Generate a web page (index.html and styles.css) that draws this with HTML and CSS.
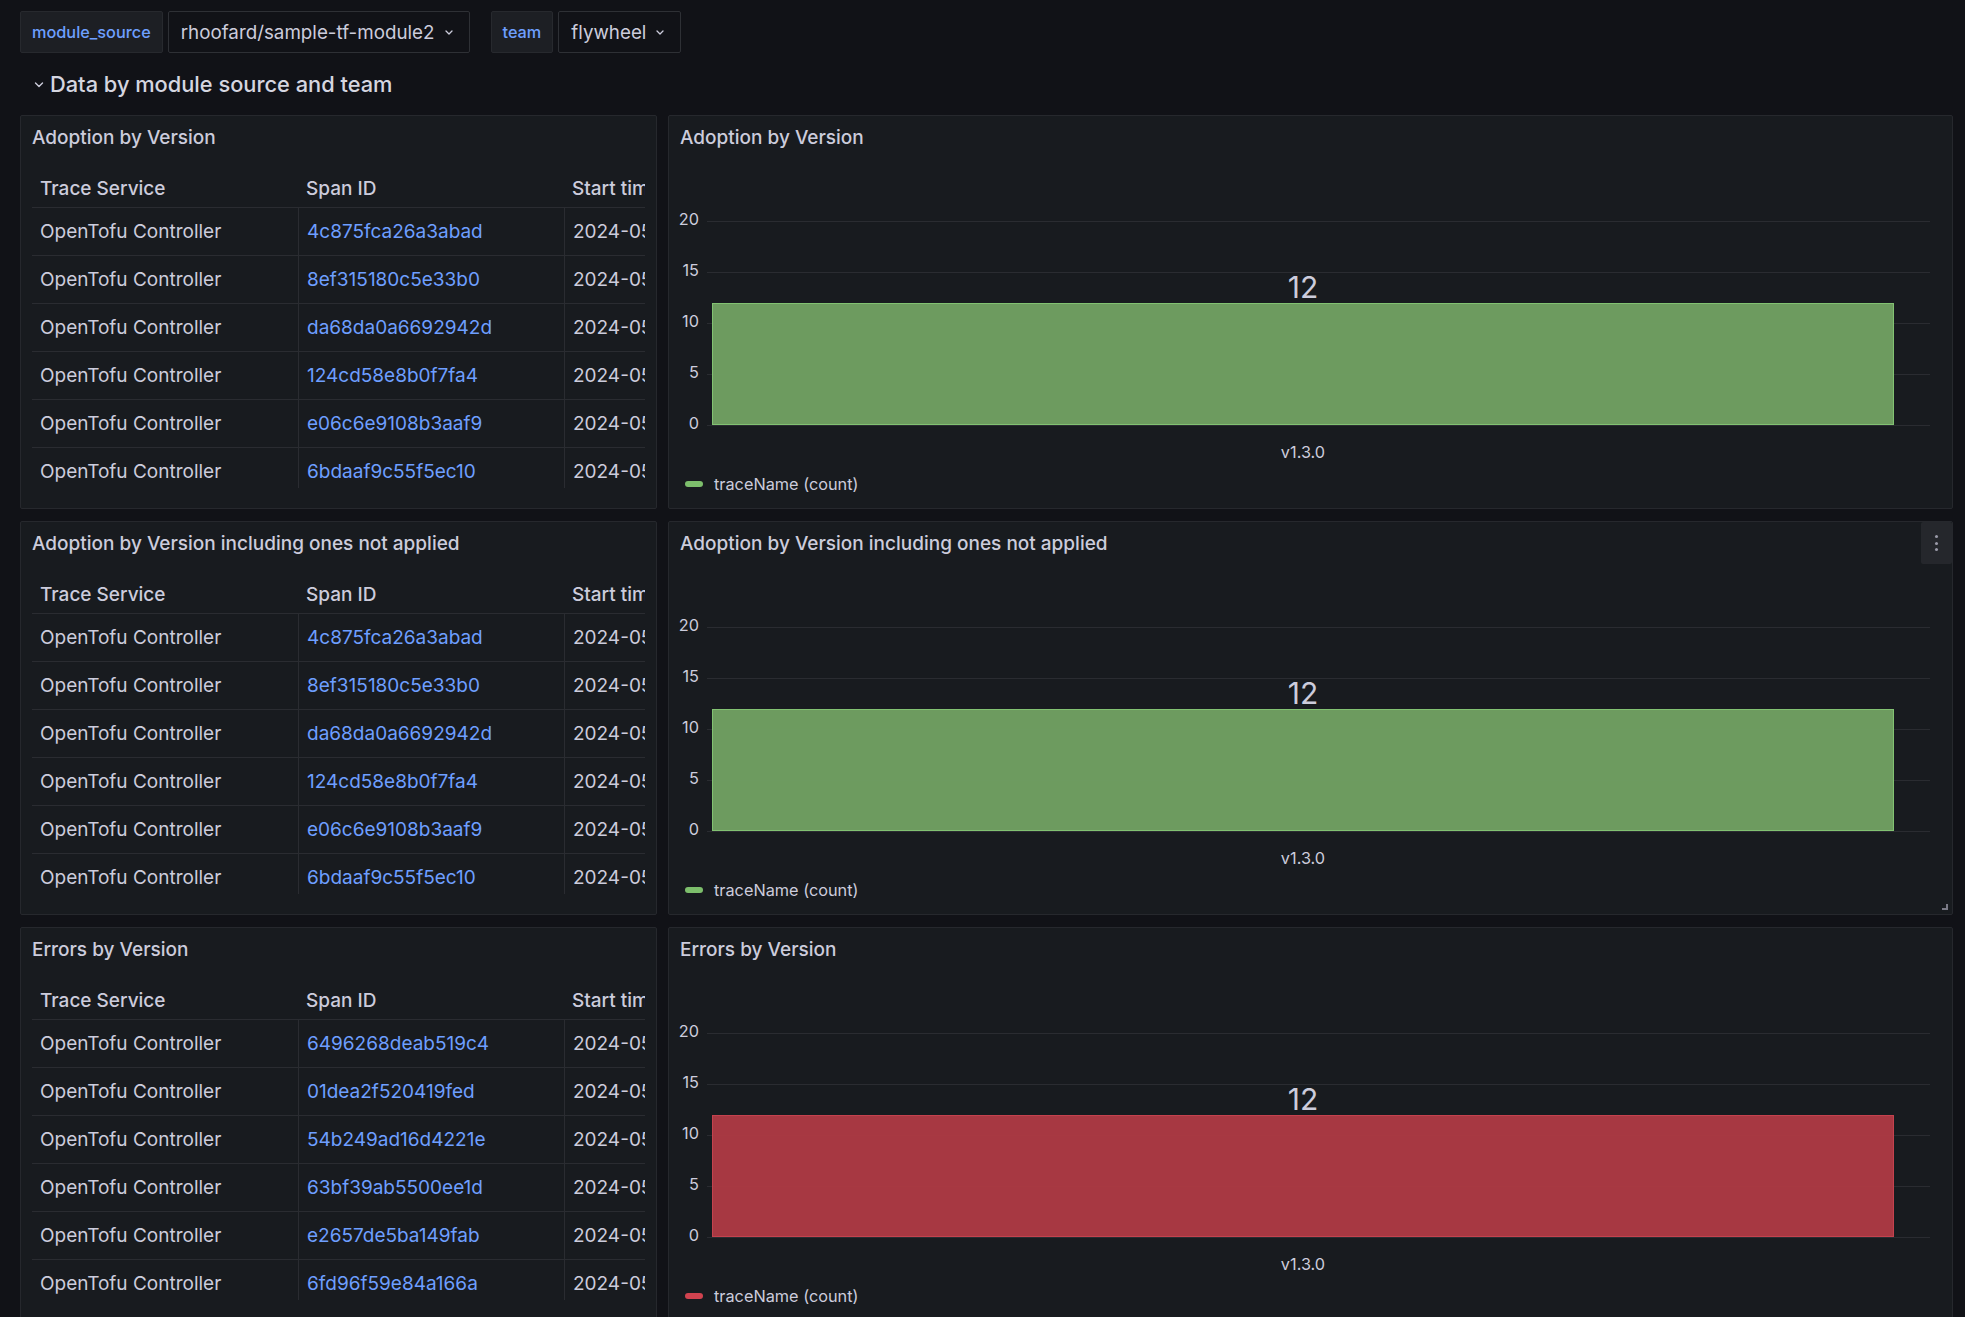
FILE: index.html
```html
<!DOCTYPE html>
<html lang="en">
<head>
<meta charset="utf-8">
<title>Dashboard</title>
<link rel="stylesheet" href="styles.css">
</head>
<body>
<div class="page">
  <div class="vars">
    <div class="var">
      <span class="var-label">module_source</span>
      <span class="var-value">rhoofard/sample-tf-module2<svg class="chev" width="8" height="5" viewBox="0 0 8 5"><polyline points="1,1 4,4 7,1" fill="none" stroke="#ccccdc" stroke-width="1.3" stroke-linecap="round" stroke-linejoin="round"/></svg></span>
    </div>
    <div class="var">
      <span class="var-label">team</span>
      <span class="var-value">flywheel<svg class="chev" width="8" height="5" viewBox="0 0 8 5"><polyline points="1,1 4,4 7,1" fill="none" stroke="#ccccdc" stroke-width="1.3" stroke-linecap="round" stroke-linejoin="round"/></svg></span>
    </div>
  </div>

  <div class="row-head">
    <svg class="row-chev" width="10" height="6" viewBox="0 0 10 6"><polyline points="1.5,1 5,4.5 8.5,1" fill="none" stroke="#ccccdc" stroke-width="1.4" stroke-linecap="round" stroke-linejoin="round"/></svg>
    <span>Data by module source and team</span>
  </div>

  <div class="grid">
    <!-- Row 1 -->
    <section class="panel">
      <div class="panel-title">Adoption by Version</div>
      <div class="table-wrap">
        <table>
          <thead><tr><th>Trace Service</th><th>Span ID</th><th>Start time</th></tr></thead>
          <tbody>
            <tr><td>OpenTofu Controller</td><td class="link">4c875fca26a3abad</td><td>2024-05-16</td></tr>
            <tr><td>OpenTofu Controller</td><td class="link">8ef315180c5e33b0</td><td>2024-05-16</td></tr>
            <tr><td>OpenTofu Controller</td><td class="link">da68da0a6692942d</td><td>2024-05-16</td></tr>
            <tr><td>OpenTofu Controller</td><td class="link">124cd58e8b0f7fa4</td><td>2024-05-16</td></tr>
            <tr><td>OpenTofu Controller</td><td class="link">e06c6e9108b3aaf9</td><td>2024-05-16</td></tr>
            <tr><td>OpenTofu Controller</td><td class="link">6bdaaf9c55f5ec10</td><td>2024-05-16</td></tr>
          </tbody>
        </table>
      </div>
    </section>
    <section class="panel">
      <div class="panel-title">Adoption by Version</div>
      <div class="chart">
        <div class="yaxis"><span>20</span><span>15</span><span>10</span><span>5</span><span>0</span></div>
        <div class="plot-col">
          <div class="plot">
            <div class="gl" style="top:0%"></div><div class="gl" style="top:25%"></div><div class="gl" style="top:50%"></div><div class="gl" style="top:75%"></div><div class="gl" style="top:100%"></div>
            <div class="bar green" style="height:60%"><span class="bar-val">12</span></div>
          </div>
          <div class="xaxis">v1.3.0</div>
        </div>
      </div>
      <div class="legend"><span class="swatch green-sw"></span>traceName (count)</div>
    </section>

    <!-- Row 2 -->
    <section class="panel">
      <div class="panel-title">Adoption by Version including ones not applied</div>
      <div class="table-wrap">
        <table>
          <thead><tr><th>Trace Service</th><th>Span ID</th><th>Start time</th></tr></thead>
          <tbody>
            <tr><td>OpenTofu Controller</td><td class="link">4c875fca26a3abad</td><td>2024-05-16</td></tr>
            <tr><td>OpenTofu Controller</td><td class="link">8ef315180c5e33b0</td><td>2024-05-16</td></tr>
            <tr><td>OpenTofu Controller</td><td class="link">da68da0a6692942d</td><td>2024-05-16</td></tr>
            <tr><td>OpenTofu Controller</td><td class="link">124cd58e8b0f7fa4</td><td>2024-05-16</td></tr>
            <tr><td>OpenTofu Controller</td><td class="link">e06c6e9108b3aaf9</td><td>2024-05-16</td></tr>
            <tr><td>OpenTofu Controller</td><td class="link">6bdaaf9c55f5ec10</td><td>2024-05-16</td></tr>
          </tbody>
        </table>
      </div>
    </section>
    <section class="panel">
      <div class="panel-title">Adoption by Version including ones not applied</div>
      <button class="menu-btn" aria-label="Menu"><i></i><i></i><i></i></button>
      <div class="chart">
        <div class="yaxis"><span>20</span><span>15</span><span>10</span><span>5</span><span>0</span></div>
        <div class="plot-col">
          <div class="plot">
            <div class="gl" style="top:0%"></div><div class="gl" style="top:25%"></div><div class="gl" style="top:50%"></div><div class="gl" style="top:75%"></div><div class="gl" style="top:100%"></div>
            <div class="bar green" style="height:60%"><span class="bar-val">12</span></div>
          </div>
          <div class="xaxis">v1.3.0</div>
        </div>
      </div>
      <div class="legend"><span class="swatch green-sw"></span>traceName (count)</div>
      <span class="resize"></span>
    </section>

    <!-- Row 3 -->
    <section class="panel">
      <div class="panel-title">Errors by Version</div>
      <div class="table-wrap">
        <table>
          <thead><tr><th>Trace Service</th><th>Span ID</th><th>Start time</th></tr></thead>
          <tbody>
            <tr><td>OpenTofu Controller</td><td class="link">6496268deab519c4</td><td>2024-05-16</td></tr>
            <tr><td>OpenTofu Controller</td><td class="link">01dea2f520419fed</td><td>2024-05-16</td></tr>
            <tr><td>OpenTofu Controller</td><td class="link">54b249ad16d4221e</td><td>2024-05-16</td></tr>
            <tr><td>OpenTofu Controller</td><td class="link">63bf39ab5500ee1d</td><td>2024-05-16</td></tr>
            <tr><td>OpenTofu Controller</td><td class="link">e2657de5ba149fab</td><td>2024-05-16</td></tr>
            <tr><td>OpenTofu Controller</td><td class="link">6fd96f59e84a166a</td><td>2024-05-16</td></tr>
          </tbody>
        </table>
      </div>
    </section>
    <section class="panel">
      <div class="panel-title">Errors by Version</div>
      <div class="chart">
        <div class="yaxis"><span>20</span><span>15</span><span>10</span><span>5</span><span>0</span></div>
        <div class="plot-col">
          <div class="plot">
            <div class="gl" style="top:0%"></div><div class="gl" style="top:25%"></div><div class="gl" style="top:50%"></div><div class="gl" style="top:75%"></div><div class="gl" style="top:100%"></div>
            <div class="bar red" style="height:60%"><span class="bar-val">12</span></div>
          </div>
          <div class="xaxis">v1.3.0</div>
        </div>
      </div>
      <div class="legend"><span class="swatch red-sw"></span>traceName (count)</div>
    </section>
  </div>
</div>
</body>
</html>
```
FILE: styles.css
```css
* { box-sizing: border-box; }
html, body {
  margin: 0;
  background: #111217;
  color: #ccccdc;
  font-family: Inter, "Noto Sans", "Liberation Sans", sans-serif;
  overflow: hidden;
}
.page {
  padding: 11px 12px 0 20px;
}
.vars {
  display: flex;
  align-items: center;
  gap: 21px;
  height: 42px;
}
.var {
  display: flex;
  gap: 5px;
  height: 42px;
}
.var-label {
  display: flex;
  align-items: center;
  padding: 0 11px;
  background: #1d1f24;
  border: 1px solid #27292e;
  border-radius: 2px;
  color: #6e9fff;
  font-size: 16.3px;
  font-weight: 500;
}
.var-value {
  display: flex;
  align-items: center;
  gap: 10px;
  padding: 0 16px 0 12px;
  background: #111217;
  border: 1px solid #2e3035;
  border-radius: 2px;
  color: #ccccdc;
  font-size: 18.8px;
}
.chev { display: block; }
.row-head {
  display: flex;
  align-items: center;
  gap: 6px;
  height: 62px;
  padding-left: 14px;
  font-size: 21.8px;
  font-weight: 500;
  color: #d5d6e0;
}
.row-chev { display: block; margin-top: 2px; }
.grid {
  display: grid;
  grid-template-columns: 637px 1285px;
  grid-auto-rows: 394px;
  column-gap: 11px;
  row-gap: 12px;
}
.panel {
  position: relative;
  display: flex;
  flex-direction: column;
  background: #181b1f;
  border: 1px solid #26282d;
  border-radius: 2px;
  overflow: hidden;
}
.panel-title {
  height: 43px;
  flex: none;
  display: flex;
  align-items: center;
  padding-left: 11px;
  font-size: 19px;
  font-weight: 500;
  color: #ccccdc;
}
/* Table */
.table-wrap {
  margin: 11px 11px 0 11px;
  height: 318px;
  overflow: hidden;
}
.table-wrap table {
  border-collapse: separate;
  border-spacing: 0;
  table-layout: fixed;
  width: 632px;
}
.table-wrap th:nth-child(1), .table-wrap th:nth-child(2) { width: 266px; }
.table-wrap th:nth-child(3) { width: 100px; }
.table-wrap th {
  height: 38px;
  padding: 0 0 0 8px;
  text-align: left;
  font-size: 19px;
  font-weight: 500;
  color: #ccccdc;
  border-bottom: 1px solid #2a2c31;
  white-space: nowrap;
  overflow: hidden;
}
.table-wrap td {
  height: 48px;
  padding: 0 0 0 8px;
  font-size: 19px;
  color: #ccccdc;
  border-bottom: 1px solid #2a2c31;
  white-space: nowrap;
  overflow: hidden;
}
.table-wrap td + td { border-left: 1px solid #2a2c31; }
.table-wrap td.link { color: #6e9fff; }
/* Chart */
.chart {
  display: flex;
  margin-top: 62px;
}
.yaxis {
  width: 30px;
  margin: -12px 8px 0 0;
  height: 224px;
  display: flex;
  flex-direction: column;
  justify-content: space-between;
  align-items: flex-end;
  font-size: 16.3px;
  line-height: 20px;
  color: #ccccdc;
}
.yaxis span {
  display: block;
  height: 20px;
}
.plot-col {
  flex: 1;
  margin-right: 22px;
}
.plot {
  position: relative;
  height: 204px;
}
.gl {
  position: absolute;
  left: 0;
  right: 0;
  height: 1px;
  background: #2a2c31;
}
.bar {
  position: absolute;
  left: 5px;
  right: 36px;
  bottom: 0;
}
.bar.green { background: rgba(112, 160, 98, 0.96); border: 1px solid #82c272; }
.bar.red { background: rgba(172, 58, 67, 0.97); border: 1px solid #c4424e; }
.bar-val {
  position: absolute;
  left: 0;
  right: 0;
  bottom: calc(100% + 2px);
  line-height: 30px;
  text-align: center;
  font-size: 30px;
  color: #ccccdc;
}
.xaxis {
  margin-top: 17px;
  padding: 0 36px 0 5px;
  text-align: center;
  font-size: 16.3px;
  line-height: 20px;
  color: #ccccdc;
}
.legend {
  display: flex;
  align-items: center;
  gap: 11px;
  margin-top: 12px;
  padding-left: 16px;
  font-size: 16.3px;
  line-height: 20px;
  color: #ccccdc;
}
.swatch {
  width: 18px;
  height: 6px;
  border-radius: 3px;
}
.green-sw { background: #7dbf6c; }
.red-sw { background: #d0434f; }
.menu-btn {
  position: absolute;
  top: 0;
  right: 0;
  width: 31px;
  height: 42px;
  padding: 0;
  border: none;
  border-radius: 2px;
  background: #25272c;
  display: flex;
  flex-direction: column;
  align-items: center;
  justify-content: center;
  gap: 3.5px;
}
.menu-btn i {
  display: block;
  width: 3px;
  height: 3px;
  border-radius: 50%;
  background: #9a9aa8;
}
.resize {
  position: absolute;
  right: 4px;
  bottom: 4px;
  width: 6px;
  height: 6px;
  border-right: 2px solid #7a7a86;
  border-bottom: 2px solid #7a7a86;
}
```
